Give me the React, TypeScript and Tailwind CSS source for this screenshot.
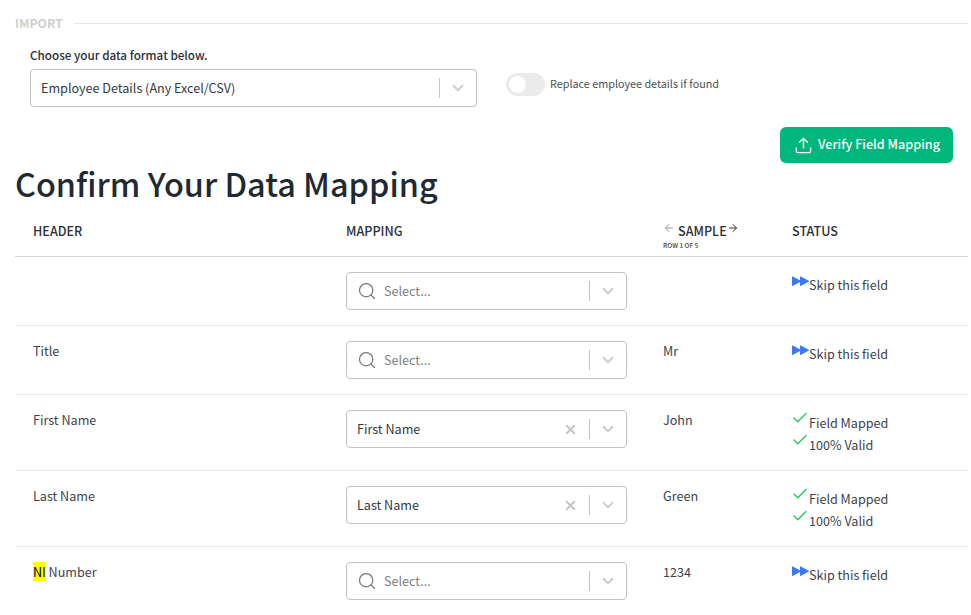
import { ChevronDown, Search, X, Check, ArrowLeft, ArrowRight, Upload } from "lucide-react";
import type { ReactNode } from "react";

const font = "font-['Noto_Sans_CJK_JP','Source_Sans_Pro',sans-serif]";
const gridCols = "grid grid-cols-[313px_317px_129px_1fr] pl-[18px]";

function Chevron() {
  return (
    <div className="flex items-center gap-[9px]">
      <span className="h-5 w-px bg-[#c4c4c4]" />
      <ChevronDown className="h-[18px] w-[18px] text-[#cccccc]" strokeWidth={2.5} />
    </div>
  );
}

function MapSelect({ value }: { value?: string }) {
  return (
    <div className="flex h-[38px] w-[281px] items-center justify-between rounded border border-[#c2c2c2] bg-white pr-[9px]">
      {value ? (
        <span className="pl-[10px] text-[12.6px] text-[#333a42]">{value}</span>
      ) : (
        <div className="flex items-center gap-[7px] pl-[10px]">
          <Search className="h-[20px] w-[20px] text-[#777]" strokeWidth={1.5} />
          <span className="text-[12.6px] text-[#808080]">Select...</span>
        </div>
      )}
      <div className="flex items-center gap-[11px]">
        {value && <X className="h-[15px] w-[15px] text-[#c4c4c4]" strokeWidth={3} />}
        <Chevron />
      </div>
    </div>
  );
}

function Skip() {
  return (
    <div className="flex items-start pt-[3px]">
      <svg width="17" height="11" viewBox="0 0 17 11" className="mt-[1px] shrink-0">
        <path d="M0.5 0.8 8.5 5.2 0.5 9.6Z M8.5 0.8 16.5 5.2 8.5 9.6Z" fill="#3b78f2" stroke="#3b78f2" strokeLinejoin="round" strokeWidth="1" />
      </svg>
      <span className="text-[12.6px] leading-[20px] text-[#3d434b]">Skip this field</span>
    </div>
  );
}

function Mapped() {
  return (
    <div className="flex flex-col gap-[2px] pt-[3px]">
      {["Field Mapped", "100% Valid"].map((t) => (
        <div key={t} className="flex items-start">
          <Check className="mt-[-4px] h-[18px] w-[18px] shrink-0 -ml-px text-[#22c55e]" strokeWidth={1.75} />
          <span className="text-[12.6px] leading-[20px] text-[#3d434b]">{t}</span>
        </div>
      ))}
    </div>
  );
}

function Row({ name, value, sample, status, tall }: { name: ReactNode; value?: string; sample?: string; status: ReactNode; tall?: boolean }) {
  return (
    <div className={`${gridCols} border-b border-[#eaeaea] pt-[15px] ${tall ? "h-[76px]" : "h-[69px]"}`}>
      <div className="text-[12.6px] leading-[20px] text-[#3d434b]">{name}</div>
      <MapSelect value={value} />
      <div className="text-[12.6px] leading-[20px] text-[#3d434b]">{sample}</div>
      {status}
    </div>
  );
}

export default function App() {
  return (
    <div className={`${font} h-[615px] w-[971px] overflow-hidden bg-white pl-[15px] pr-[3px]`}>
      <div className="flex items-center gap-[11px] pt-[14px]">
        <span className="text-[12.2px] leading-[19px] font-bold text-[#cfcfcf]">IMPORT</span>
        <span className="h-px flex-1 bg-[#e6e6e6]" />
      </div>

      <div className="pl-[15px] pt-[12px]">
        <div className="text-[11.7px] leading-[19px] font-medium text-[#2b3038]">Choose your data format below.</div>
        <div className="mt-[5px] flex items-center">
          <div className="flex h-[38px] w-[447px] items-center justify-between rounded border border-[#c2c2c2] pl-[10px] pr-[9px]">
            <span className="text-[12.6px] text-[#333a42]">Employee Details (Any Excel/CSV)</span>
            <Chevron />
          </div>
          <div className="mb-[8px] ml-[29px] flex items-center">
            <div className="h-[23px] w-[39px] rounded-full bg-[#ebebeb] p-[3px]">
              <div className="h-[17px] w-[17px] rounded-full bg-white" />
            </div>
            <span className="mb-[2px] ml-[5px] text-[10.8px] text-[#4a4f57]">Replace employee details if found</span>
          </div>
        </div>
      </div>

      <div className="flex justify-end pr-[15px] pt-[20px]">
        <div className="flex h-[36px] w-[173px] items-center whitespace-nowrap rounded-md bg-[#00b67a] pl-[14px] text-[12.6px] font-medium text-white">
          <Upload className="mr-[5px] h-[19px] w-[19px]" strokeWidth={1.75} />
          <span className="mb-[2px]">Verify Field Mapping</span>
        </div>
      </div>

      <h1 className="mt-[-3px] text-[32.4px] leading-[46px] font-medium text-[#212932]">Confirm Your Data Mapping</h1>

      <div className={`${gridCols} mt-[6px] h-[45px] border-b border-[#d9d9d9] pt-[9px] text-[12.6px] font-medium text-[#2b3038]`}>
        <div className="leading-[20px]">HEADER</div>
        <div className="leading-[20px]">MAPPING</div>
        <div>
          <div className="flex items-start leading-[20px]">
            <ArrowLeft className="mt-[1px] mr-[3px] h-3 w-3 text-[#999]" />
            SAMPLE
            <ArrowRight className="mt-[1px] h-3 w-3 text-[#333]" />
          </div>
          <div className="text-[6.5px] leading-[8px] font-medium text-[#444]">ROW 1 OF 5</div>
        </div>
        <div className="leading-[20px]">STATUS</div>
      </div>

      <Row name="" status={<Skip />} />
      <Row name="Title" sample="Mr" status={<Skip />} />
      <Row name="First Name" value="First Name" sample="John" status={<Mapped />} tall />
      <Row name="Last Name" value="Last Name" sample="Green" status={<Mapped />} tall />
      <Row
        name={<><mark className="bg-[#ffff00] text-black">NI</mark> Number</>}
        sample="1234"
        status={<Skip />}
      />
    </div>
  );
}
